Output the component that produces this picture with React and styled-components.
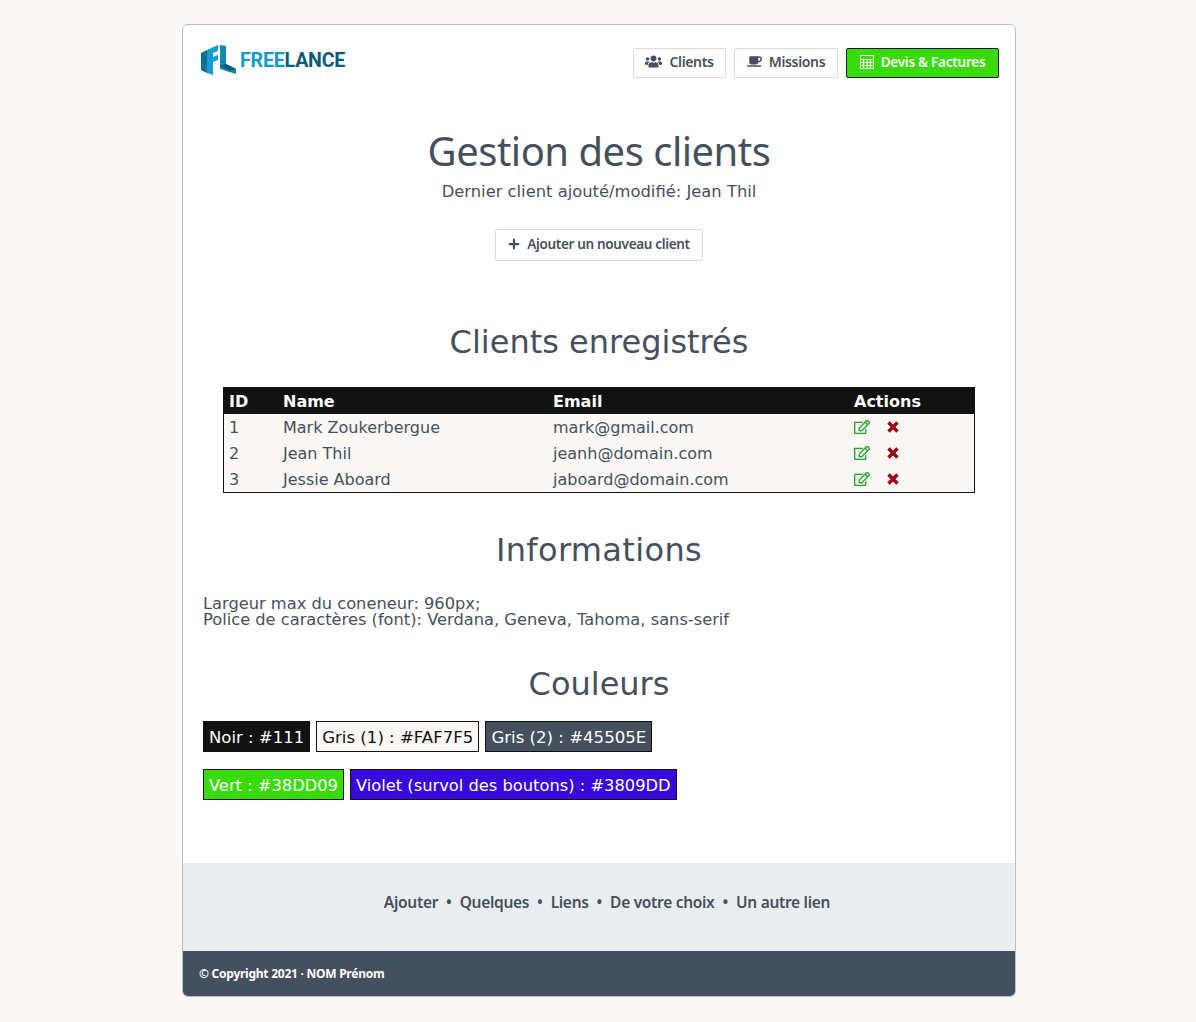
import React from 'react'
import styled, { createGlobalStyle } from 'styled-components'
import { FaUsers, FaCoffee, FaPlus, FaRegEdit } from 'react-icons/fa'

const GlobalStyle = createGlobalStyle`
  html, body { margin: 0; padding: 0; background: #faf7f5; }
  body { font-family: Verdana, "DejaVu Sans", sans-serif; color: #45505e; }
`

const Page = styled.div`
  width: 834px;
  margin: 24px 0 26px 182px;
  box-sizing: border-box;
  background: #fff;
  border: 1px solid #bdbdbd;
  border-radius: 6px;
  overflow: hidden;
`

const Header = styled.header`
  display: flex;
  justify-content: space-between;
  align-items: flex-start;
  height: 104px;
  box-sizing: border-box;
  padding: 20px 16px 0 18px;
`

const LogoBox = styled.div`
  display: flex;
  align-items: center;
  gap: 3px;
  height: 30px;
`

const LogoText = styled.span`
  font-family: Roboto, sans-serif;
  font-weight: 700;
  font-size: 19.6px;
  letter-spacing: -0.2px;
  color: #0f9ac9;
  span { color: #0a5a78; }
`

const Nav = styled.nav`
  display: flex;
  gap: 8px;
  margin-top: 3px;
`

const Button = styled.a`
  display: inline-flex;
  align-items: center;
  justify-content: center;
  gap: 7px;
  height: ${p => p.$h || 30}px;
  width: ${p => p.$w}px;
  box-sizing: border-box;
  padding-bottom: ${p => p.$pb || 4}px;
  border: 1px solid ${p => (p.$primary ? '#111' : '#d3dde5')};
  border-radius: 2px;
  background: ${p => (p.$primary ? '#38dd09' : '#fff')};
  color: ${p => (p.$primary ? '#fff' : '#45505e')};
  font-family: "Noto Sans", sans-serif;
  font-weight: 600;
  font-size: ${p => p.$size || 14}px;
  letter-spacing: ${p => p.$ls || -0.35}px;
`

const Main = styled.main`
  padding: 0 20px;
  text-align: center;
`

const Title = styled.h1`
  margin: 0;
  font-family: "Noto Sans", sans-serif;
  font-weight: 400;
  font-size: 40px;
  letter-spacing: -0.5px;
  line-height: 43px;
`

const Subtitle = styled.p`
  margin: 10px 0 28px;
  font-size: 16.35px;
  line-height: 19px;
`

const Heading = styled.h2`
  margin: ${p => p.$mt}px 0 ${p => p.$mb}px;
  font-weight: 400;
  font-size: 32px;
  letter-spacing: ${p => p.$ls || 0}px;
  line-height: 38px;
`

const Table = styled.table`
  width: 752px;
  margin: 0 auto;
  border: 1px solid #111;
  border-spacing: 0;
  background: #faf7f5;
  text-align: left;
  font-size: 16px;
`

const Th = styled.th`
  height: 26px;
  padding: 0 0 0 5px;
  background: #111;
  color: #fff;
  font-weight: 700;
  font-size: 16px;
  width: ${p => p.$w}px;
`

const Td = styled.td`
  height: 26px;
  padding: 0 0 0 5px;
`

const Actions = styled.div`
  display: flex;
  align-items: center;
  gap: 17px;
`

const Info = styled.p`
  margin: 0;
  text-align: left;
  font-size: 16.25px;
  line-height: 16px;
`

const Chips = styled.div`
  display: flex;
  gap: 6px;
  margin-bottom: 17px;
`

const Chip = styled.span`
  display: inline-block;
  box-sizing: border-box;
  height: 31px;
  line-height: 31px;
  padding: 0 5px;
  border: 1px solid #111;
  background: ${p => p.$bg};
  color: ${p => p.$fg};
  font-size: ${p => p.$size}px;
`

const FooterNav = styled.div`
  display: flex;
  justify-content: center;
  align-items: center;
  box-sizing: border-box;
  height: 88px;
  margin-top: 63px;
  padding: 0 0 11px 16px;
  gap: 8px;
  background: #ebeef1;
  font-family: "Noto Sans", sans-serif;
  font-weight: 600;
  font-size: 15.5px;
  letter-spacing: -0.3px;
`

const Copyright = styled.footer`
  height: 45px;
  line-height: 45px;
  padding-left: 16px;
  background: #45505e;
  color: #fff;
  font-family: "Noto Sans", sans-serif;
  font-weight: 700;
  font-size: 12px;
  letter-spacing: -0.25px;
`

const Logo = () => (
  <svg width="36" height="30" viewBox="0 0 36 30">
    <path d="M0 8 L6 5 L6 28 L0 25 Z" fill="#0b6f96" />
    <path d="M6 5 L17 0 L17 6 L12 8 L12 12 L17 10 L17 15 L12 17 L12 30 L6 28 Z" fill="#12a0d0" />
    <path d="M19 0 L25 1 L25 19 L35 24 L35 29 L19 24 Z" fill="#0f88b3" />
    <path d="M25 19 L35 24 L29 26 L19 21 Z" fill="#0a5a78" />
  </svg>
)

const Calculator = () => (
  <svg width="14" height="14" viewBox="0 0 14 14" fill="none" stroke="#fff" strokeWidth="1">
    <rect x="0.5" y="0.5" width="13" height="13" />
    <path d="M0.5 4.5H13.5M0.5 7.5H13.5M0.5 10.5H13.5M3.5 4.5V13.5M7 4.5V13.5M10.5 4.5V13.5" />
  </svg>
)

const Cross = () => (
  <svg width="12" height="12" viewBox="0 0 12 12" stroke="#a00010" strokeWidth="3.4">
    <path d="M1.5 1.5L10.5 10.5M10.5 1.5L1.5 10.5" />
  </svg>
)

const clients = [
  { id: 1, name: 'Mark Zoukerbergue', email: 'mark@gmail.com' },
  { id: 2, name: 'Jean Thil', email: 'jeanh@domain.com' },
  { id: 3, name: 'Jessie Aboard', email: 'jaboard@domain.com' },
]

export default function App() {
  return (
    <>
      <GlobalStyle />
      <Page>
        <Header>
          <LogoBox>
            <Logo />
            <LogoText>FREE<span>LANCE</span></LogoText>
          </LogoBox>
          <Nav>
            <Button $w={93}><FaUsers size={17} />Clients</Button>
            <Button $w={104}><FaCoffee size={15} />Missions</Button>
            <Button $w={153} $primary $pb={3} $size={13.5} $ls={-0.25}><Calculator />Devis &amp; Factures</Button>
          </Nav>
        </Header>
        <Main>
          <Title>Gestion des clients</Title>
          <Subtitle>Dernier client ajouté/modifié: Jean Thil</Subtitle>
          <Button $w={208} $h={32} $pb={2} $size={13.5} $ls={-0.33}><FaPlus size={12} />Ajouter un nouveau client</Button>
          <Heading $mt={62} $mb={26}>Clients enregistrés</Heading>
          <Table>
            <thead>
              <tr>
                <Th $w={49}>ID</Th>
                <Th $w={265}>Name</Th>
                <Th $w={296}>Email</Th>
                <Th>Actions</Th>
              </tr>
            </thead>
            <tbody>
              {clients.map(c => (
                <tr key={c.id}>
                  <Td>{c.id}</Td>
                  <Td>{c.name}</Td>
                  <Td>{c.email}</Td>
                  <Td>
                    <Actions>
                      <FaRegEdit size={16} color="#1fa32d" />
                      <Cross />
                    </Actions>
                  </Td>
                </tr>
              ))}
            </tbody>
          </Table>
          <Heading $mt={38} $mb={27} $ls={0.35}>Informations</Heading>
          <Info>Largeur max du coneneur: 960px;</Info>
          <Info>Police de caractères (font): Verdana, Geneva, Tahoma, sans-serif</Info>
          <Heading $mt={37} $mb={18}>Couleurs</Heading>
          <Chips>
            <Chip $size={16.5} $bg="#111" $fg="#fff">Noir : #111</Chip>
            <Chip $size={16.58} $bg="#faf7f5" $fg="#111">Gris (1) : #FAF7F5</Chip>
            <Chip $size={16.58} $bg="#45505e" $fg="#fff">Gris (2) : #45505E</Chip>
          </Chips>
          <Chips>
            <Chip $size={16.3} $bg="#38dd09" $fg="#fff">Vert : #38DD09</Chip>
            <Chip $size={16.3} $bg="#3809dd" $fg="#fff">Violet (survol des boutons) : #3809DD</Chip>
          </Chips>
        </Main>
        <FooterNav>
          <span>Ajouter</span><span>•</span>
          <span>Quelques</span><span>•</span>
          <span>Liens</span><span>•</span>
          <span>De votre choix</span><span>•</span>
          <span>Un autre lien</span>
        </FooterNav>
        <Copyright>© Copyright 2021 · NOM Prénom</Copyright>
      </Page>
    </>
  )
}
